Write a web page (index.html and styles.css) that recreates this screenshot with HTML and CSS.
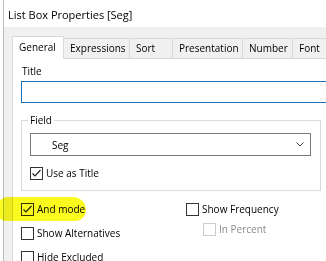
FILE: index.html
```html
<!DOCTYPE html>
<html lang="en">
    <head>
        <meta charset="UTF-8" />
        <title>List Box Properties [Seg]</title>
        <link rel="stylesheet" href="styles.css">
    </head>
    <body>
        <div class="window">
            <div class="titlebar">List Box Properties [Seg]</div>

            <div class="client">
                <div class="tabs">
                    <div class="tab tab-general active">General</div>
                    <div class="tab tab-expressions">Expressions</div>
                    <div class="tab tab-sort">Sort</div>
                    <div class="tab tab-presentation">Presentation</div>
                    <div class="tab tab-number">Number</div>
                    <div class="tab tab-font">Font</div>
                </div>

                <div class="panel">
                    <div class="field-label">Title</div>
                    <input type="text" class="title-input" />

                    <fieldset class="group">
                        <legend>Field</legend>
                        <div class="combo">
                            <span>Seg</span>
                            <svg class="chevron" width="8" height="5" viewBox="0 0 8 5">
                                <polyline points="0.5,0.5 4,4 7.5,0.5" fill="none" stroke="#404040" stroke-width="1" />
                            </svg>
                        </div>
                        <label class="check">
                            <span class="box">
                                <svg width="11" height="11" viewBox="0 0 11 11">
                                    <polyline points="1.5,5.5 4,8 9.5,2" fill="none" stroke="#222" stroke-width="1.2" />
                                </svg>
                            </span>
                            Use as Title
                        </label>
                    </fieldset>

                    <div class="options">
                        <div class="col">
                            <label class="check marked">
                                <span class="marker"></span>
                                <span class="box">
                                    <svg width="11" height="11" viewBox="0 0 11 11">
                                        <polyline points="1.5,5.5 4,8 9.5,2" fill="none" stroke="#222" stroke-width="1.2" />
                                    </svg>
                                </span>
                                And mode
                            </label>
                            <label class="check"><span class="box"></span>Show Alternatives</label>
                            <label class="check"><span class="box"></span>Hide Excluded</label>
                        </div>
                        <div class="col col-right">
                            <label class="check"><span class="box"></span>Show Frequency</label>
                            <label class="check sub disabled"><span class="box"></span>In Percent</label>
                        </div>
                    </div>
                </div>
            </div>
        </div>
    </body>
</html>
```

FILE: styles.css
```css
body {
    margin: 0;
    background-color: #ffffff;
    font-family: "Open Sans", "Noto Sans", sans-serif;
    font-size: 10px;
    color: #000;
    overflow: hidden;
}

.window {
    margin-left: 3px;
    border-left: 1px solid #b4bcc4;
    height: 261px;
}

.titlebar {
    height: 24px;
    padding-top: 3px;
    padding-left: 4px;
    line-height: 24px;
    font-size: 11px;
    background-color: #ffffff;
}

.client {
    background-color: #f0f0f0;
    padding: 8px 0 0 8px;
    height: 226px;
}

.tabs {
    display: flex;
    align-items: flex-end;
    height: 23px;
}

.tab {
    box-sizing: border-box;
    height: 20px;
    line-height: 18px;
    padding-left: 6px;
    margin-right: -1px;
    border: 1px solid #d9d9d9;
    border-bottom: none;
    background-color: #f0f0f0;
    flex-shrink: 0;
}

.tab.active {
    height: 23px;
    line-height: 20px;
    margin-bottom: -1px;
    background-color: #ffffff;
    position: relative;
    z-index: 1;
}

.tab-general { width: 52px; }
.tab-expressions { width: 67px; }
.tab-sort { width: 44px; }
.tab-presentation { width: 71px; }
.tab-number { width: 51px; }
.tab-font { width: 60px; }

.panel {
    box-sizing: border-box;
    width: 340px;
    height: 210px;
    border: 1px solid #d9d9d9;
    background-color: #ffffff;
    padding: 5px 0 0 8px;
}

.field-label {
    line-height: 14px;
    padding-left: 1px;
}

.title-input {
    display: block;
    box-sizing: border-box;
    width: 320px;
    height: 22px;
    margin: 3px 0 0 0;
    border: 1px solid #1d71b8;
    padding: 0;
    outline: none;
}

.group {
    box-sizing: border-box;
    width: 300px;
    margin: 10px 0 0 0;
    padding: 6px 8px 9px 8px;
    border: 1px solid #dcdcdc;
}

.group legend {
    padding: 0 2px;
    margin-left: -2px;
    line-height: 14px;
}

.combo {
    box-sizing: border-box;
    display: flex;
    align-items: center;
    justify-content: space-between;
    width: 281px;
    height: 23px;
    border: 1px solid #7a7a7a;
    padding: 0 6px 0 21px;
}

.check {
    display: flex;
    align-items: center;
    height: 16px;
    gap: 3px;
    position: relative;
}

.group .check {
    margin-top: 9px;
}

.box {
    box-sizing: border-box;
    display: flex;
    align-items: center;
    justify-content: center;
    width: 13px;
    height: 13px;
    border: 1px solid #333333;
    background-color: #ffffff;
    position: relative;
    z-index: 1;
}

.options {
    display: flex;
    margin-top: 10px;
}

.col {
    display: flex;
    flex-direction: column;
    gap: 8px;
    width: 168px;
}

.col-right {
    gap: 4px;
}

.check.sub {
    margin-left: 17px;
}

.check.disabled {
    color: #8a8a8a;
}

.check.disabled .box {
    border-color: #cccccc;
}

/* highlighter stroke over the "And mode" row */
.marker {
    position: absolute;
    left: -22px;
    top: -4px;
    width: 87px;
    height: 24px;
    background-color: #fafa1e;
    border-radius: 8px 13px 11px 6px;
    mix-blend-mode: multiply;
    z-index: 2;
}
```
